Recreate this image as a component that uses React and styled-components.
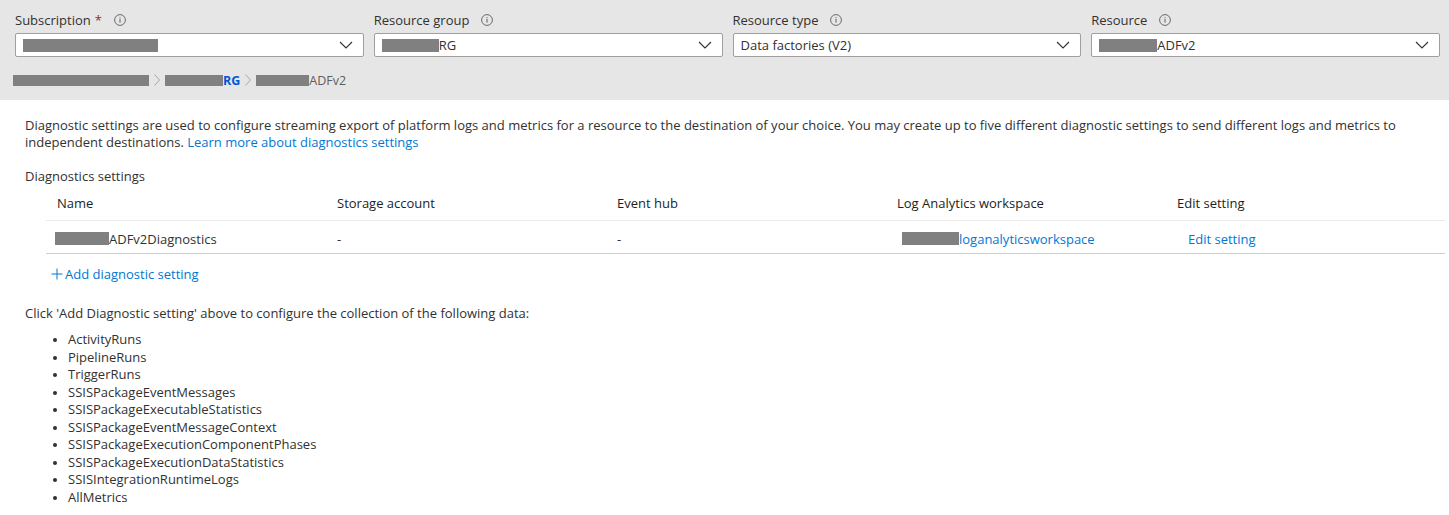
import React from "react";
import styled, { createGlobalStyle } from "styled-components";

const Global = createGlobalStyle`
  html, body { margin: 0; padding: 0; background: #fff; }
  body {
    font-family: "Open Sans", "Noto Sans", Arial, sans-serif;
    font-size: 12.5px;
    color: #323130;
    -webkit-font-smoothing: antialiased;
  }
`;

const Page = styled.div`
  width: 1449px;
  height: 515px;
  overflow: hidden;
  background: #fff;
`;

const Header = styled.div`
  background: #e6e6e6;
  height: 100px;
  box-sizing: border-box;
  padding: 11px 9px 0 15px;
`;

const Filters = styled.div`
  display: grid;
  grid-template-columns: repeat(4, 1fr);
  column-gap: 10px;
`;

const Field = styled.div`
  display: flex;
  flex-direction: column;
`;

const Label = styled.div`
  display: flex;
  align-items: center;
  height: 18px;
  font-size: 13px;
  color: #323130;
  margin-bottom: 4px;
`;

const Req = styled.span`
  color: #a4262c;
  margin-left: 4px;
`;

const InfoWrap = styled.span`
  display: inline-flex;
  margin-left: 12px;
`;

const InfoIcon = () => (
  <InfoWrap>
    <svg width="12" height="12" viewBox="0 0 12 12">
      <circle cx="6" cy="6" r="5.4" fill="none" stroke="#605e5c" strokeWidth="0.9" />
      <rect x="5.5" y="5" width="1" height="3.6" fill="#605e5c" />
      <rect x="5.5" y="3.2" width="1" height="1" fill="#605e5c" />
    </svg>
  </InfoWrap>
);

const Select = styled.div`
  height: 24px;
  box-sizing: border-box;
  background: #fff;
  border: 1px solid #a19f9d;
  border-radius: 2px;
  display: flex;
  align-items: center;
  padding: 0 10px 0 7px;
  font-size: 13px;
  color: #323130;
`;

const SelectText = styled.div`
  flex: 1;
  display: flex;
  align-items: center;
`;

const Redact = styled.span`
  display: inline-block;
  width: ${(p) => p.w}px;
  height: ${(p) => p.h || 13}px;
  background: #808080;
  vertical-align: middle;
`;

const Chevron = () => (
  <svg width="14" height="8" viewBox="0 0 14 8">
    <path d="M1 1 L7 7 L13 1" fill="none" stroke="#323130" strokeWidth="1.1" />
  </svg>
);

const Crumbs = styled.div`
  display: flex;
  align-items: center;
  margin-top: 15px;
  margin-left: -2px;
  height: 16px;
  font-size: 12.5px;
  color: #605e5c;
`;

const SepWrap = styled.span`
  display: inline-flex;
  margin: 0 5px 0 5px;
`;

const CrumbSep = () => (
  <SepWrap>
    <svg width="6" height="12" viewBox="0 0 6 12">
      <path d="M0.5 0.5 L5.5 6 L0.5 11.5" fill="none" stroke="#a8a6a4" strokeWidth="1" />
    </svg>
  </SepWrap>
);

const CrumbLink = styled.span`
  color: #0058d1;
  font-weight: 700;
`;

const Body = styled.div`
  padding: 17px 25px 0 25px;
`;

const Intro = styled.p`
  margin: 0;
  font-size: 13px;
  line-height: 17px;
  color: #323130;
  width: 1395px;
  margin-right: -30px;
`;

const Link = styled.a`
  color: #0078d4;
  text-decoration: none;
`;

const SectionTitle = styled.div`
  margin-top: 17px;
  font-size: 13px;
  line-height: 17px;
`;

const Table = styled.div`
  margin: 0 -21px 0 21px;
`;

const Row = styled.div`
  display: grid;
  grid-template-columns: repeat(4, 280px) 1fr;
  align-items: center;
  height: ${(p) => (p.head ? 36 : 33)}px;
  padding-top: ${(p) => (p.head ? 0 : 3)}px;
  border-bottom: 1px solid ${(p) => (p.head ? "#edebe9" : "#d2d0ce")};
  box-sizing: border-box;
`;

const Cell = styled.div`
  padding-left: ${(p) => p.pl || 11}px;
  font-size: 13px;
  color: ${(p) => (p.head ? "#201f1e" : "#323130")};
  font-weight: ${(p) => (p.head ? 500 : 400)};
  display: flex;
  align-items: center;
  white-space: nowrap;
`;

const AddButton = styled.a`
  display: inline-flex;
  align-items: center;
  color: #0078d4;
  font-size: 13px;
  margin-top: 11px;
  margin-left: 26px;
  gap: 2px;
`;

const PlusIcon = () => (
  <svg width="12" height="12" viewBox="0 0 12 12">
    <path d="M6 0.5 V11.5 M0.5 6 H11.5" stroke="#0078d4" strokeWidth="1" fill="none" />
  </svg>
);

const Note = styled.div`
  margin-top: 21px;
  font-size: 13px;
  line-height: 17px;
`;

const List = styled.ul`
  margin: 9px 0 0 0;
  padding-left: 43px;
  font-size: 13px;
  line-height: 17.55px;
  li::marker { font-size: 12px; }
`;

const items = [
  "ActivityRuns",
  "PipelineRuns",
  "TriggerRuns",
  "SSISPackageEventMessages",
  "SSISPackageExecutableStatistics",
  "SSISPackageEventMessageContext",
  "SSISPackageExecutionComponentPhases",
  "SSISPackageExecutionDataStatistics",
  "SSISIntegrationRuntimeLogs",
  "AllMetrics",
];

export default function App() {
  return (
    <Page>
      <Global />
      <Header>
        <Filters>
          <Field>
            <Label>
              Subscription<Req>*</Req>
              <InfoIcon />
            </Label>
            <Select>
              <SelectText>
                <Redact w={135} />
              </SelectText>
              <Chevron />
            </Select>
          </Field>
          <Field>
            <Label>
              Resource group
              <InfoIcon />
            </Label>
            <Select>
              <SelectText>
                <Redact w={57} />
                RG
              </SelectText>
              <Chevron />
            </Select>
          </Field>
          <Field>
            <Label>
              Resource type
              <InfoIcon />
            </Label>
            <Select>
              <SelectText>Data factories (V2)</SelectText>
              <Chevron />
            </Select>
          </Field>
          <Field>
            <Label>
              Resource
              <InfoIcon />
            </Label>
            <Select>
              <SelectText>
                <Redact w={58} />
                ADFv2
              </SelectText>
              <Chevron />
            </Select>
          </Field>
        </Filters>
        <Crumbs>
          <Redact w={136} h={11} />
          <CrumbSep />
          <Redact w={58} h={11} />
          <CrumbLink>RG</CrumbLink>
          <CrumbSep />
          <Redact w={53} h={11} />
          ADFv2
        </Crumbs>
      </Header>
      <Body>
        <Intro>
          Diagnostic settings are used to configure streaming export of platform logs and metrics for a
          resource to the destination of your choice. You may create up to five different diagnostic settings
          to send different logs and metrics to independent destinations.{" "}
          <Link href="#">Learn more about diagnostics settings</Link>
        </Intro>
        <SectionTitle>Diagnostics settings</SectionTitle>
        <Table>
          <Row head>
            <Cell head>Name</Cell>
            <Cell head>Storage account</Cell>
            <Cell head>Event hub</Cell>
            <Cell head>Log Analytics workspace</Cell>
            <Cell head>Edit setting</Cell>
          </Row>
          <Row>
            <Cell pl={9}>
              <Redact w={54} />
              ADFv2Diagnostics
            </Cell>
            <Cell>-</Cell>
            <Cell>-</Cell>
            <Cell pl={16}>
              <Redact w={57} />
              <Link href="#">loganalyticsworkspace</Link>
            </Cell>
            <Cell pl={22}>
              <Link href="#">Edit setting</Link>
            </Cell>
          </Row>
        </Table>
        <AddButton>
          <PlusIcon />
          Add diagnostic setting
        </AddButton>
        <Note>Click 'Add Diagnostic setting' above to configure the collection of the following data:</Note>
        <List>
          {items.map((i) => (
            <li key={i}>{i}</li>
          ))}
        </List>
      </Body>
    </Page>
  );
}
